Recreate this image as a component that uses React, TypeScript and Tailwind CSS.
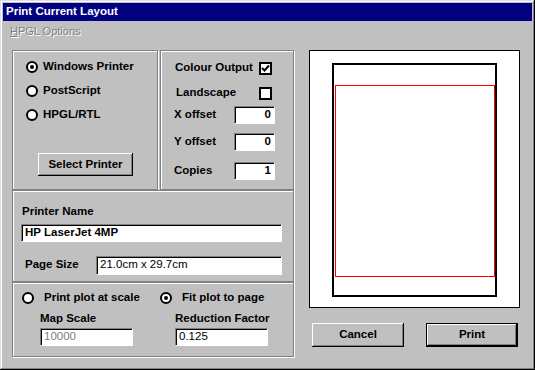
import React from "react";

const etched = "border border-[#808080] shadow-[inset_1px_1px_#fff,1px_1px_#fff]";
const sunken =
  "bg-white border-t border-l border-[#808080] border-r border-b border-r-white border-b-white shadow-[inset_1px_1px_#000]";
const raised =
  "bg-[#c0c0c0] shadow-[inset_-1px_-1px_#000,inset_1px_1px_#fff,inset_-2px_-2px_#808080]";

function Radio({ checked, label, className = "" }: { checked?: boolean; label: string; className?: string }) {
  return (
    <div className={`flex items-center ${className}`}>
      <span className="flex h-[12px] w-[12px] items-center justify-center rounded-full border-2 border-black bg-white">
        {checked && <span className="h-[4px] w-[4px] rounded-full bg-black" />}
      </span>
      <span className="ml-[5px] font-bold">{label}</span>
    </div>
  );
}

function Check({ checked }: { checked?: boolean }) {
  return (
    <span className="flex h-[13px] w-[13px] items-center justify-center border-2 border-black bg-white">
      {checked && (
        <svg width="9" height="9" viewBox="0 0 9 9">
          <path d="M1 4 L3.5 6.5 L8 1.5" stroke="#000" strokeWidth="2" fill="none" />
        </svg>
      )}
    </span>
  );
}

function Field({ value, className = "", text = "" }: { value: string; className?: string; text?: string }) {
  return (
    <div className={`${sunken} flex h-[18px] items-center px-[3px] ${className}`}>
      <span className={text}>{value}</span>
    </div>
  );
}

export default function App() {
  return (
    <div className="relative flex h-[370px] w-[535px] flex-col bg-[#c0c0c0] p-[3px] font-['Liberation_Sans',Arial,sans-serif] text-[11.5px] leading-none text-black shadow-[inset_-1px_-1px_#000,inset_1px_1px_#dfdfdf,inset_-2px_-2px_#808080,inset_2px_2px_#fff]">
      <div className="flex h-[18px] items-center bg-[#000080] px-[3px] font-bold text-white">
        Print Current Layout
      </div>

      <div className="flex h-[29px] items-start pl-[7px] pt-[5px] text-[11px] text-[#808080] [text-shadow:1px_1px_#fff]">
        <span>
          <span className="underline">H</span>PGL Options
        </span>
      </div>

      <div className="ml-[9px] flex">
        {/* left column */}
        <div className="flex w-[282px] flex-col">
          <div className="flex h-[140px] gap-[2px]">
            <div className={`${etched} flex w-[146px] flex-col pl-[13px] pt-[10px]`}>
              <Radio checked label="Windows Printer" className="h-[12px]" />
              <Radio label="PostScript" className="mt-[12px] h-[12px]" />
              <Radio label="HPGL/RTL" className="mt-[12px] h-[12px]" />
              <button
                className={`${raised} ml-[12px] mt-[32px] h-[23px] w-[95px] font-bold`}
              >
                Select Printer
              </button>
            </div>

            <div className={`${etched} flex w-[134px] flex-col pl-[13px] pr-[18px] pt-[8px] font-bold`}>
              <div className="flex h-[18px] items-center justify-between">
                <span className="ml-[1px]">Colour Output</span>
                <span className="mr-[3px]">
                  <Check checked />
                </span>
              </div>
              <div className="mt-[7px] flex h-[18px] items-center justify-between">
                <span className="ml-[2px]">Landscape</span>
                <span className="mr-[3px]">
                  <Check />
                </span>
              </div>
              <div className="mt-[4px] flex h-[18px] items-center justify-between">
                <span>X offset</span>
                <Field value="0" className="w-[41px] justify-end" />
              </div>
              <div className="mt-[9px] flex h-[18px] items-center justify-between">
                <span>Y offset</span>
                <Field value="0" className="w-[41px] justify-end" />
              </div>
              <div className="mt-[11px] flex h-[18px] items-center justify-between">
                <span>Copies</span>
                <Field value="1" className="w-[41px] justify-end" />
              </div>
            </div>
          </div>

          <div className={`${etched} flex h-[92px] flex-col pl-[8px] pr-[11px] pt-[15px]`}>
            <span className="ml-[1px] font-bold">Printer Name</span>
            <Field value="HP LaserJet 4MP" className="mt-[6px]" text="font-bold" />
            <div className="mt-[14px] flex items-center">
              <span className="ml-[4px] w-[71px] font-bold">Page Size</span>
              <Field value="21.0cm x 29.7cm" className="h-[19px] flex-1" />
            </div>
          </div>

          <div className={`${etched} flex h-[75px] flex-col pt-[9px]`}>
            <div className="flex h-[12px] items-center">
              <Radio label="Print plot at scale" className="ml-[9px] w-[138px] [&>span:last-child]:ml-[10px]" />
              <Radio checked label="Fit plot to page" className="[&>span:last-child]:ml-[10px]" />
            </div>
            <div className="mt-[9px] flex">
              <div className="ml-[27px] flex w-[135px] flex-col">
                <span className="font-bold">Map Scale</span>
                <Field value="10000" className="mt-[3px] w-[93px]" text="text-[#808080]" />
              </div>
              <div className="flex flex-col">
                <span className="font-bold">Reduction Factor</span>
                <Field value="0.125" className="mt-[3px] w-[93px]" />
              </div>
            </div>
          </div>
        </div>

        {/* right column */}
        <div className="ml-[15px] flex w-[211px] flex-col">
          <div className="h-[258px] border border-black bg-white pl-[22px] pt-[12px]">
            <div className="h-[234px] w-[165px] border-2 border-black pl-[1px] pt-[20px]">
              <div className="h-[192px] w-[160px] border border-[#ff0000]" />
            </div>
          </div>
          <div className="mt-[15px] flex">
            <button className={`${raised} ml-[3px] h-[24px] w-[92px] font-bold`}>Cancel</button>
            <button className={`${raised} ml-[22px] h-[24px] w-[92px] border border-black font-bold`}>
              Print
            </button>
          </div>
        </div>
      </div>
    </div>
  );
}
